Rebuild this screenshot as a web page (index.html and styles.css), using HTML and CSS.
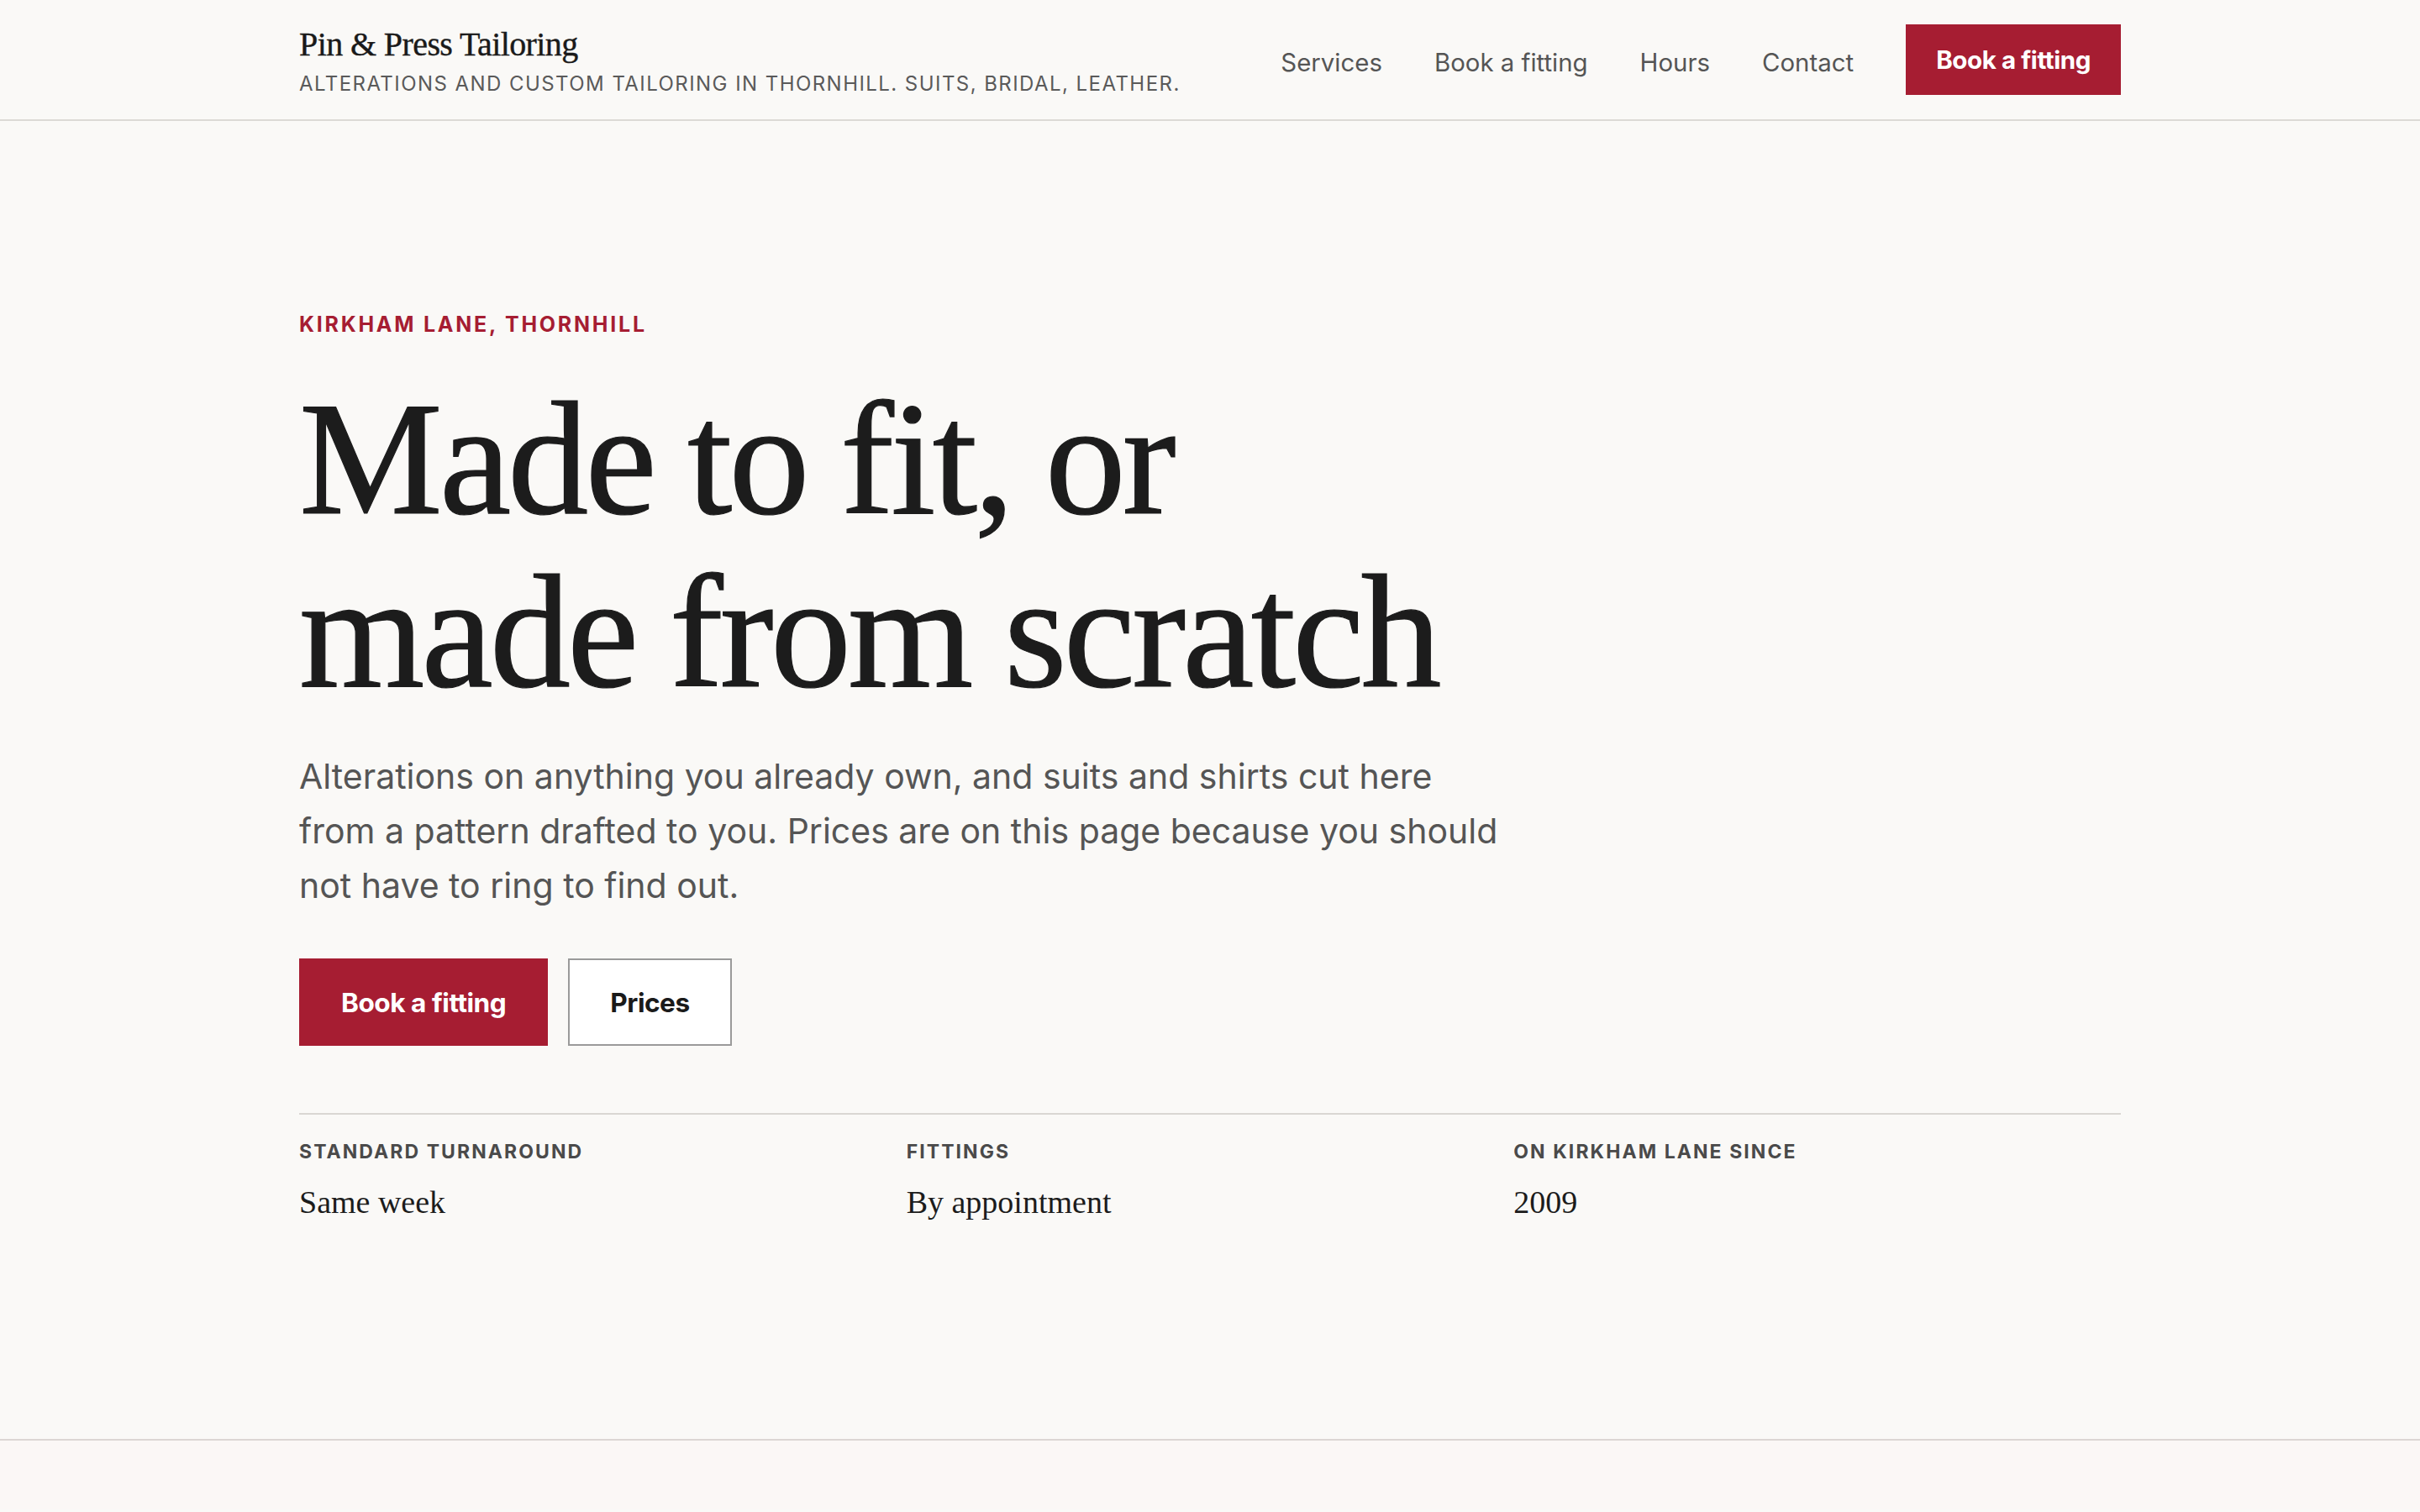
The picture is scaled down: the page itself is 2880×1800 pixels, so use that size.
FILE: index.html
```html
<!DOCTYPE html>
<html lang="en">
<head>
<meta charset="utf-8">
<title>Pin &amp; Press Tailoring</title>
<link rel="stylesheet" href="styles.css">
</head>
<body>
<header class="site-header">
  <div class="container header-inner">
    <div class="brand">
      <div class="brand-name">Pin &amp; Press Tailoring</div>
      <div class="brand-tag">Alterations and custom tailoring in Thornhill. Suits, bridal, leather.</div>
    </div>
    <nav class="nav">
      <a class="nav-link" href="#services">Services</a>
      <a class="nav-link" href="#book">Book a fitting</a>
      <a class="nav-link" href="#hours">Hours</a>
      <a class="nav-link" href="#contact">Contact</a>
      <a class="btn btn-primary btn-small" href="#book">Book a fitting</a>
    </nav>
  </div>
</header>
<main>
  <section class="hero">
    <div class="container">
      <p class="eyebrow">Kirkham Lane, Thornhill</p>
      <h1 class="hero-title">Made to fit, or<br>made from scratch</h1>
      <p class="hero-lede">Alterations on anything you already own, and suits and shirts cut here from a pattern drafted to you. Prices are on this page because you should not have to ring to find out.</p>
      <div class="hero-actions">
        <a class="btn btn-primary" href="#book">Book a fitting</a>
        <a class="btn btn-outline" href="#prices">Prices</a>
      </div>
      <dl class="facts">
        <div class="fact">
          <dt class="fact-label">Standard turnaround</dt>
          <dd class="fact-value">Same week</dd>
        </div>
        <div class="fact">
          <dt class="fact-label">Fittings</dt>
          <dd class="fact-value">By appointment</dd>
        </div>
        <div class="fact">
          <dt class="fact-label">On Kirkham Lane since</dt>
          <dd class="fact-value">2009</dd>
        </div>
      </dl>
    </div>
  </section>
  <section class="next"></section>
</main>
</body>
</html>
```

FILE: styles.css
```css
html {
  zoom: 2;
}
* {
  box-sizing: border-box;
}
body {
  margin: 0;
  background: #faf9f7;
  color: #1c1c1c;
  font-family: Inter, "Noto Sans", "Liberation Sans", sans-serif;
  -webkit-font-smoothing: antialiased;
}
a {
  text-decoration: none;
  color: inherit;
}
.container {
  max-width: 1084px;
  margin: 0 auto;
}
.site-header {
  border-bottom: 1px solid #dcdad6;
  height: 72px;
}
.header-inner {
  display: flex;
  align-items: center;
  justify-content: space-between;
  height: 100%;
}
.brand {
  display: flex;
  flex-direction: column;
  gap: 3px;
  padding-top: 2px;
}
.brand-name {
  font-family: "Liberation Serif", "DejaVu Serif", serif;
  font-size: 20px;
  line-height: 1.2;
  color: #1a1a1a;
  letter-spacing: -0.015em;
  -webkit-text-stroke: 0.2px #1a1a1a;
}
.brand-tag {
  font-size: 12px;
  text-transform: uppercase;
  letter-spacing: 0.06em;
  color: #5a5a5a;
  line-height: 1.4;
}
.nav {
  display: flex;
  align-items: center;
  gap: 31px;
}
.nav-link {
  font-size: 14.7px;
  color: #555;
  padding-top: 3px;
}
.btn {
  display: inline-flex;
  align-items: center;
  justify-content: center;
  font-weight: 700;
  font-size: 15.8px;
  border: 1px solid transparent;
  letter-spacing: -0.015em;
}
.btn-primary {
  background: #a61d32;
  color: #fff;
  border-color: #a61d32;
}
.btn-outline {
  background: #fff;
  color: #1a1a1a;
  border-color: #9a9a9a;
}
.btn-small {
  height: 42px;
  padding: 0 17px;
  font-size: 14.8px;
}
.hero {
  padding: 112px 0 127px;
  border-bottom: 1px solid #dcd6d4;
}
.eyebrow {
  margin: 0;
  font-size: 12.5px;
  font-weight: 700;
  letter-spacing: 0.11em;
  text-transform: uppercase;
  color: #a61d32;
  line-height: 18px;
}
.hero-title {
  margin: 20px 0 0;
  font-family: "Liberation Serif", "DejaVu Serif", serif;
  font-weight: 400;
  font-size: 96px;
  line-height: 103px;
  letter-spacing: -0.02em;
  word-spacing: -0.02em;
  color: #1c1c1c;
  -webkit-text-stroke: 0.6px #1c1c1c;
}
.hero-lede {
  margin: 18px 0 0;
  max-width: 720px;
  font-size: 20.5px;
  line-height: 32.5px;
  color: #555;
}
.hero-actions {
  display: flex;
  gap: 12px;
  margin-top: 27px;
}
.hero-actions .btn {
  height: 52px;
  padding: 0 24px;
}
.facts {
  margin: 40px 0 0;
  padding-top: 14px;
  border-top: 1px solid #d9d7d3;
  display: grid;
  grid-template-columns: repeat(3, 1fr);
}
.fact-label {
  font-size: 11.5px;
  font-weight: 700;
  letter-spacing: 0.09em;
  text-transform: uppercase;
  color: #4a4a4a;
  line-height: 16px;
}
.fact-value {
  margin: 8px 0 0;
  font-family: "Liberation Serif", "DejaVu Serif", serif;
  font-size: 19px;
  line-height: 28px;
  color: #1c1c1c;
}
.next {
  background: #fbf7f6;
  height: 41px;
}
```
